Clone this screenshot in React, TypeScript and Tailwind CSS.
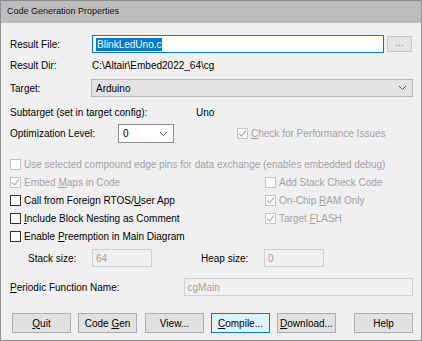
import React from "react";

function Check({ checked, disabled }: { checked?: boolean; disabled?: boolean }) {
  return (
    <span
      className={`inline-flex items-center justify-center w-[11px] h-[11px] border bg-white shrink-0 ${
        disabled ? "border-[#c4c4c4] bg-[#f0f0f0]" : "border-[#333333]"
      }`}
    >
      {checked && (
        <svg width="9" height="9" viewBox="0 0 9 9">
          <path d="M1 4.5 L3.5 7 L8 1.5" fill="none" stroke={disabled ? "#b8b8b8" : "#222"} strokeWidth="1.2" />
        </svg>
      )}
    </span>
  );
}

function CheckRow({
  checked,
  disabled,
  children,
}: {
  checked?: boolean;
  disabled?: boolean;
  children: React.ReactNode;
}) {
  return (
    <div className={`flex items-center gap-[3px] ${disabled ? "text-[#a3a3a3]" : "text-black"}`}>
      <Check checked={checked} disabled={disabled} />
      <span>{children}</span>
    </div>
  );
}

function Chevron() {
  return (
    <svg width="9" height="6" viewBox="0 0 9 6">
      <path d="M1 1 L4.5 4.5 L8 1" fill="none" stroke="#555" strokeWidth="1" />
    </svg>
  );
}

function Btn({ children, focus }: { children: React.ReactNode; focus?: boolean }) {
  return (
    <div
      className={`w-[59px] h-[20px] flex items-center justify-center border ${
        focus ? "border-[#0078d7] bg-[#e5f1fb]" : "border-[#adadad] bg-[#e1e1e1]"
      }`}
    >
      <span className="whitespace-pre">{children}</span>
    </div>
  );
}

export default function App() {
  return (
    <div
      className="w-[422px] h-[341px] bg-[#f0f0f0] border border-[#8f8f8f] text-[10px] text-black flex flex-col overflow-hidden"
      style={{ fontFamily: '"Liberation Sans", Arial, sans-serif' }}
    >
      {/* Title bar */}
      <div className="h-[22px] bg-[#bdbdbd] flex items-center px-[6px] text-[9px] text-[#111] shrink-0">
        Code Generation Properties
      </div>

      <div className="pl-[9px] pr-[8px] flex flex-col">
        {/* Result File */}
        <div className="flex items-center h-[18px] mt-[12px]">
          <span className="w-[82px]">Result File:</span>
          <div className="w-[292px] h-[18px] border border-[#0078d7] bg-white flex items-center pl-[3px]">
            <span className="bg-[#0078d7] text-white px-[1px] leading-[13px]">BlinkLedUno.c</span>
          </div>
          <div className="ml-[3px] w-[25px] h-[16px] border border-[#c8c8c8] bg-[#e5e5e5] flex items-center justify-center text-[#888] leading-none pb-[3px]">
            ...
          </div>
        </div>

        {/* Result Dir */}
        <div className="flex items-center h-[18px] mt-[3px]">
          <span className="w-[82px]">Result Dir:</span>
          <span>C:\Altair\Embed2022_64\cg</span>
        </div>

        {/* Target */}
        <div className="flex items-center h-[18px] mt-[5px]">
          <span className="w-[81px]">
            Tar<span className="underline">g</span>et:
          </span>
          <div className="w-[322px] h-[18px] border border-[#bababa] bg-[#e3e3e3] flex items-center justify-between pl-[4px] pr-[5px]">
            <span>Arduino</span>
            <Chevron />
          </div>
        </div>

        {/* Subtarget */}
        <div className="flex items-center h-[18px] mt-[6px]">
          <span className="w-[186px]">Subtarget (set in target config):</span>
          <span>Uno</span>
        </div>

        {/* Optimization */}
        <div className="flex items-center h-[19px] mt-[3px]">
          <span className="w-[108px]">Optimization Level:</span>
          <div className="w-[56px] h-[19px] border border-[#8a8a8a] bg-white flex items-center justify-between pl-[4px] pr-[5px]">
            <span>0</span>
            <Chevron />
          </div>
          <div className="ml-[63px]">
            <CheckRow checked disabled>
              <span className="underline">C</span>heck for Performance Issues
            </CheckRow>
          </div>
        </div>

        {/* Options */}
        <div className="flex flex-col mt-[12px]">
          <div className="h-[18px] flex items-center">
            <CheckRow disabled>
              Use selected compound edge pins for data exchange (enables embedded debug)
            </CheckRow>
          </div>
          <div className="flex">
            <div className="w-[255px] flex flex-col">
              <div className="h-[18px] flex items-center">
                <CheckRow checked disabled>
                  Embed <span className="underline">M</span>aps in Code
                </CheckRow>
              </div>
              <div className="h-[18px] flex items-center">
                <CheckRow>
                  Call from Foreign RTOS/<span className="underline">U</span>ser App
                </CheckRow>
              </div>
              <div className="h-[18px] flex items-center">
                <CheckRow>
                  <span className="underline">I</span>nclude Block Nesting as Comment
                </CheckRow>
              </div>
              <div className="h-[18px] flex items-center">
                <CheckRow>
                  Enable <span className="underline">P</span>reemption in Main Diagram
                </CheckRow>
              </div>
            </div>
            <div className="flex flex-col">
              <div className="h-[18px] flex items-center">
                <CheckRow disabled>Add Stack Check Code</CheckRow>
              </div>
              <div className="h-[18px] flex items-center">
                <CheckRow checked disabled>
                  On-Chip <span className="underline">R</span>AM Only
                </CheckRow>
              </div>
              <div className="h-[18px] flex items-center">
                <CheckRow checked disabled>
                  Target <span className="underline">F</span>LASH
                </CheckRow>
              </div>
            </div>
          </div>
        </div>

        {/* Stack / Heap */}
        <div className="flex items-center h-[18px] mt-[4px]">
          <span className="w-[82px] pl-[18px] whitespace-nowrap">Stack size:</span>
          <div className="w-[60px] h-[18px] border border-[#d0d0d0] flex items-center pl-[3px] text-[#a3a3a3]">64</div>
          <span className="ml-[49px] w-[63px] whitespace-nowrap">Heap size:</span>
          <div className="w-[60px] h-[18px] border border-[#d0d0d0] flex items-center pl-[3px] text-[#a3a3a3]">0</div>
        </div>

        {/* Periodic function */}
        <div className="flex items-center h-[18px] mt-[11px]">
          <span className="w-[174px]">
            <span className="underline">P</span>eriodic Function Name:
          </span>
          <div className="w-[230px] h-[18px] border border-[#d0d0d0] flex items-center pl-[3px] text-[#a3a3a3]">
            cgMain
          </div>
        </div>

        {/* Buttons */}
        <div className="flex items-center mt-[17px] pl-[2px]">
          <Btn>
            <span className="underline">Q</span>uit
          </Btn>
          <div className="ml-[7px]">
            <Btn>
              Code <span className="underline">G</span>en
            </Btn>
          </div>
          <div className="ml-[8px]">
            <Btn>View...</Btn>
          </div>
          <div className="ml-[7px]">
            <Btn focus>
              <span className="underline">C</span>ompile...
            </Btn>
          </div>
          <div className="ml-[7px]">
            <Btn>
              <span className="underline">D</span>ownload...
            </Btn>
          </div>
          <div className="ml-[18px]">
            <Btn>Help</Btn>
          </div>
        </div>
      </div>
    </div>
  );
}
